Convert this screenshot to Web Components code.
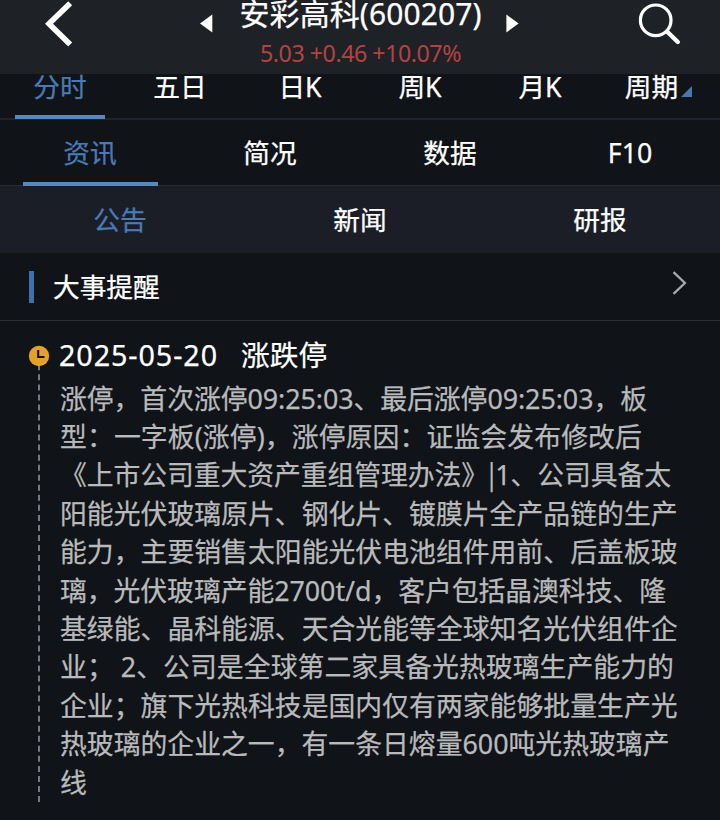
<!DOCTYPE html>
<html lang="zh-CN">
<head>
<meta charset="utf-8">
<title>安彩高科</title>
<style>
html,body{margin:0;background:#101317}
body{width:720px;height:820px;overflow:hidden;font-family:"Noto Sans","Noto Sans CJK SC",sans-serif;color:#fff;-webkit-text-stroke:.25px currentColor}
</style>
</head>
<body>
<stock-page></stock-page>
<script>
const define = (name, html, ready) => customElements.define(name, class extends HTMLElement {
  connectedCallback() {
    if (this.shadowRoot) return;
    const t = document.createElement('template');
    t.innerHTML = html;
    this.attachShadow({mode: 'open'}).append(t.content.cloneNode(true));
    if (ready) ready(this);
  }
});

/* One line of text whose tracking is adjusted to fill the width in "w". */
define('fit-line', `<style>:host{display:block;white-space:pre}span{display:inline-block}b{font-weight:400;font-family:"Noto Sans CJK SC",sans-serif;line-height:1}</style><span></span>`, el => {
  const s = el.shadowRoot.querySelector('span'), w = +el.getAttribute('w');
  s.innerHTML = el.getAttribute('text').replace('|', '<b>|</b>');
  const n = s.textContent.length;
  s.style.letterSpacing = ((w - s.getBoundingClientRect().width) / n) + 'px';
});

define('stock-header', `<style>
:host{display:grid;grid-template-columns:200px 320px 200px;height:74px;background:#1e2227;position:relative;z-index:1}
svg{display:block}
.mid{display:grid;grid-template-columns:40px 240px 40px}
.txt{display:flex;flex-direction:column;margin-left:-1px}
.title{font-size:30px;line-height:28px;height:28px;padding-left:.5px}
.price{font-size:23.2px;line-height:30px;height:30px;margin-top:10px;padding-left:21px;color:#b54241;-webkit-text-stroke:0}
</style>
<svg width="200" height="74"><path d="M70.2 3.3L49 23.7L70.2 44.4" fill="none" stroke="#fff" stroke-width="5.6"/></svg>
<div class="mid">
<svg width="40" height="74"><path d="M0 23.5L12.3 14.5V32.5Z" fill="#fff"/></svg>
<div class="txt"><fit-line class="title" w="242" text="安彩高科(600207)"></fit-line><fit-line class="price" w="201" text="5.03 +0.46 +10.07%"></fit-line></div>
<svg width="40" height="74"><path d="M38.6 23.5L26.4 14.5V32.5Z" fill="#fff"/></svg>
</div>
<svg width="200" height="74"><circle cx="135.7" cy="20.3" r="15.3" fill="none" stroke="#fff" stroke-width="3.2"/><path d="M147 31.5L157.8 42" stroke="#fff" stroke-width="4.4" stroke-linecap="round"/></svg>`);

define('tab-item', `<style>
:host{display:flex;flex:1;justify-content:center;align-items:flex-start;font-size:26.7px;line-height:40px;position:relative}
:host([active]){color:#4a7ab5}
i{display:none;position:absolute;bottom:var(--drop,0px);left:12.5%;width:75%;height:4px;background:#5689c0}
:host([active][bar]) i{display:block}
div{display:flex;margin-top:var(--lift,0px)}
</style><div><slot></slot></div><i></i>`);

define('tab-row', `<style>
:host{display:flex;box-sizing:border-box;width:720px}
:host([kind=period]){height:45.5px;border-bottom:2px solid #20232b;--drop:-1px;--lift:-7px}
:host([kind=main]){height:66.5px;padding-top:13.5px;border-bottom:1px solid #252932;--drop:-1px}
:host([kind=sub]){height:67px;padding-top:14px;background:#1b1e26}
</style><slot></slot>`);

define('section-head', `<style>
:host{display:flex;align-items:center;box-sizing:border-box;height:68px;border-bottom:1px solid #2b2e33;padding:0 33px 0 29px;font-size:26.7px}
i{width:5px;height:32px;background:#3e70ab;margin-right:19px}
span{flex:1;margin-bottom:3px}
svg{margin-bottom:8px}
</style><i></i><span><slot></slot></span>
<svg width="15" height="24"><path d="M1.5 1.2L12.9 12L1.5 22.8" fill="none" stroke="#a7a8aa" stroke-width="2.3"/></svg>`);

define('event-item', `<style>
:host{display:grid;grid-template-columns:59px 1fr;height:499px}
.rail{display:block}
.head{display:flex;font-size:28.7px;line-height:40px;height:40px;margin-top:14px}
.head fit-line:first-child{width:182px}
.body{color:#b9babc;font-size:26.85px;line-height:38.4px;padding:4.6px 0 0 1px}
</style>
<svg class="rail" width="59" height="499"><path d="M39 43.3V481.3" stroke="#77797c" stroke-width="2" stroke-dasharray="6 4.04"/><circle cx="39" cy="35" r="10.2" fill="#e5a02c"/><path d="M38.2 29V36H44.5" fill="none" stroke="#101317" stroke-width="2"/></svg>
<div><div class="head"><fit-line w="159" text="2025-05-20"></fit-line><fit-line w="86.3" text="涨跌停"></fit-line></div>
<div class="body"></div></div>`, el => {
  const lines = [
    ['涨停，首次涨停09:25:03、最后涨停09:25:03，板', 587],
    ['型：一字板(涨停)，涨停原因：证监会发布修改后', 582],
    ['《上市公司重大资产重组管理办法》|1、公司具备太', 611],
    ['阳能光伏玻璃原片、钢化片、镀膜片全产品链的生产', 617.6],
    ['能力，主要销售太阳能光伏电池组件用前、后盖板玻', 617.6],
    ['璃，光伏玻璃产能2700t/d，客户包括晶澳科技、隆', 606],
    ['基绿能、晶科能源、天合光能等全球知名光伏组件企', 617.6],
    ['业； 2、公司是全球第二家具备光热玻璃生产能力的', 614],
    ['企业；旗下光热科技是国内仅有两家能够批量生产光', 617.6],
    ['热玻璃的企业之一，有一条日熔量600吨光热玻璃产', 609.5],
    ['线', 26.85]];
  const body = el.shadowRoot.querySelector('.body');
  for (const [text, w] of lines) {
    const l = document.createElement('fit-line');
    l.setAttribute('text', text);
    l.setAttribute('w', w);
    body.append(l);
  }
});

define('stock-page', `<style>
:host{display:block;width:720px;height:820px;background:#101317}
svg{align-self:flex-start;margin:19px 3px 0 3px}
</style>
<stock-header></stock-header>
<tab-row kind="period"><tab-item active bar>分时</tab-item><tab-item>五日</tab-item><tab-item>日K</tab-item><tab-item>周K</tab-item><tab-item>月K</tab-item><tab-item>周期<svg width="11" height="11"><path d="M11 0V11H0Z" fill="#4677b2"/></svg></tab-item></tab-row>
<tab-row kind="main"><tab-item active bar>资讯</tab-item><tab-item>简况</tab-item><tab-item>数据</tab-item><tab-item>F10</tab-item></tab-row>
<tab-row kind="sub"><tab-item active>公告</tab-item><tab-item>新闻</tab-item><tab-item>研报</tab-item></tab-row>
<section-head>大事提醒</section-head>
<event-item></event-item>`);
</script>
</body>
</html>
